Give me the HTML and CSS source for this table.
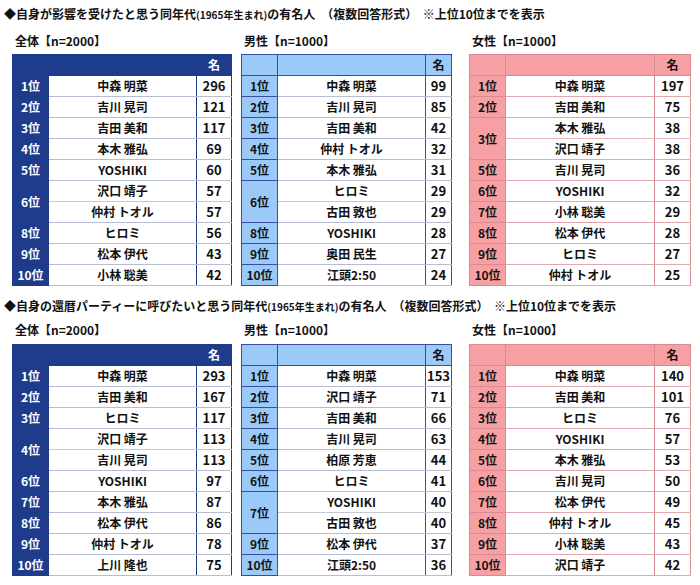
FILE: index.html
```html
<!DOCTYPE html>
<html lang="ja">
<head>
<meta charset="utf-8">
<title>同年代の有名人ランキング</title>
<link rel="stylesheet" href="styles.css">
</head>
<body>
<section class="section first">
  <h2 class="title">◆自身が影響を受けたと思う同年代<span class="small">(1965年生まれ)</span>の有名人　（複数回答形式）&nbsp;&nbsp;※上位10位までを表示</h2>
  <div class="tables">
    <div class="block all">
      <div class="cap">全体【n=2000】</div>
      <table>
        <colgroup><col class="c-rank"><col class="c-name"><col class="c-num"></colgroup>
        <tr class="head"><th></th><th></th><th>名</th></tr>
        <tr><th>1位</th><td>中森 明菜</td><td class="num">296</td></tr>
        <tr><th>2位</th><td>吉川 晃司</td><td class="num">121</td></tr>
        <tr><th>3位</th><td>吉田 美和</td><td class="num">117</td></tr>
        <tr><th>4位</th><td>本木 雅弘</td><td class="num">69</td></tr>
        <tr><th>5位</th><td>YOSHIKI</td><td class="num">60</td></tr>
        <tr><th rowspan="2">6位</th><td class="tie">沢口 靖子</td><td class="num tie">57</td></tr>
        <tr><td>仲村 トオル</td><td class="num">57</td></tr>
        <tr><th>8位</th><td>ヒロミ</td><td class="num">56</td></tr>
        <tr><th>9位</th><td>松本 伊代</td><td class="num">43</td></tr>
        <tr><th>10位</th><td>小林 聡美</td><td class="num">42</td></tr>
      </table>
    </div>
    <div class="block men">
      <div class="cap">男性【n=1000】</div>
      <table>
        <colgroup><col class="c-rank"><col class="c-name"><col class="c-num"></colgroup>
        <tr class="head"><th></th><th></th><th>名</th></tr>
        <tr><th>1位</th><td>中森 明菜</td><td class="num">99</td></tr>
        <tr><th>2位</th><td>吉川 晃司</td><td class="num">85</td></tr>
        <tr><th>3位</th><td>吉田 美和</td><td class="num">42</td></tr>
        <tr><th>4位</th><td>仲村 トオル</td><td class="num">32</td></tr>
        <tr><th>5位</th><td>本木 雅弘</td><td class="num">31</td></tr>
        <tr><th rowspan="2">6位</th><td class="tie">ヒロミ</td><td class="num tie">29</td></tr>
        <tr><td>古田 敦也</td><td class="num">29</td></tr>
        <tr><th>8位</th><td>YOSHIKI</td><td class="num">28</td></tr>
        <tr><th>9位</th><td>奥田 民生</td><td class="num">27</td></tr>
        <tr><th>10位</th><td>江頭2:50</td><td class="num">24</td></tr>
      </table>
    </div>
    <div class="block women">
      <div class="cap">女性【n=1000】</div>
      <table>
        <colgroup><col class="c-rank"><col class="c-name"><col class="c-num"></colgroup>
        <tr class="head"><th></th><th></th><th>名</th></tr>
        <tr><th>1位</th><td>中森 明菜</td><td class="num">197</td></tr>
        <tr><th>2位</th><td>吉田 美和</td><td class="num">75</td></tr>
        <tr><th rowspan="2">3位</th><td class="tie">本木 雅弘</td><td class="num tie">38</td></tr>
        <tr><td>沢口 靖子</td><td class="num">38</td></tr>
        <tr><th>5位</th><td>吉川 晃司</td><td class="num">36</td></tr>
        <tr><th>6位</th><td>YOSHIKI</td><td class="num">32</td></tr>
        <tr><th>7位</th><td>小林 聡美</td><td class="num">29</td></tr>
        <tr><th>8位</th><td>松本 伊代</td><td class="num">28</td></tr>
        <tr><th>9位</th><td>ヒロミ</td><td class="num">27</td></tr>
        <tr><th>10位</th><td>仲村 トオル</td><td class="num">25</td></tr>
      </table>
    </div>
  </div>
</section>

<section class="section second">
  <h2 class="title">◆自身の還暦パーティーに呼びたいと思う同年代<span class="small">(1965年生まれ)</span>の有名人　（複数回答形式）&nbsp;&nbsp;※上位10位までを表示</h2>
  <div class="tables">
    <div class="block all">
      <div class="cap">全体【n=2000】</div>
      <table>
        <colgroup><col class="c-rank"><col class="c-name"><col class="c-num"></colgroup>
        <tr class="head"><th></th><th></th><th>名</th></tr>
        <tr><th>1位</th><td>中森 明菜</td><td class="num">293</td></tr>
        <tr><th>2位</th><td>吉田 美和</td><td class="num">167</td></tr>
        <tr><th>3位</th><td>ヒロミ</td><td class="num">117</td></tr>
        <tr><th rowspan="2">4位</th><td class="tie">沢口 靖子</td><td class="num tie">113</td></tr>
        <tr><td>吉川 晃司</td><td class="num">113</td></tr>
        <tr><th>6位</th><td>YOSHIKI</td><td class="num">97</td></tr>
        <tr><th>7位</th><td>本木 雅弘</td><td class="num">87</td></tr>
        <tr><th>8位</th><td>松本 伊代</td><td class="num">86</td></tr>
        <tr><th>9位</th><td>仲村 トオル</td><td class="num">78</td></tr>
        <tr><th>10位</th><td>上川 隆也</td><td class="num">75</td></tr>
      </table>
    </div>
    <div class="block men">
      <div class="cap">男性【n=1000】</div>
      <table>
        <colgroup><col class="c-rank"><col class="c-name"><col class="c-num"></colgroup>
        <tr class="head"><th></th><th></th><th>名</th></tr>
        <tr><th>1位</th><td>中森 明菜</td><td class="num">153</td></tr>
        <tr><th>2位</th><td>沢口 靖子</td><td class="num">71</td></tr>
        <tr><th>3位</th><td>吉田 美和</td><td class="num">66</td></tr>
        <tr><th>4位</th><td>吉川 晃司</td><td class="num">63</td></tr>
        <tr><th>5位</th><td>柏原 芳恵</td><td class="num">44</td></tr>
        <tr><th>6位</th><td>ヒロミ</td><td class="num">41</td></tr>
        <tr><th rowspan="2">7位</th><td class="tie">YOSHIKI</td><td class="num tie">40</td></tr>
        <tr><td>古田 敦也</td><td class="num">40</td></tr>
        <tr><th>9位</th><td>松本 伊代</td><td class="num">37</td></tr>
        <tr><th>10位</th><td>江頭2:50</td><td class="num">36</td></tr>
      </table>
    </div>
    <div class="block women">
      <div class="cap">女性【n=1000】</div>
      <table>
        <colgroup><col class="c-rank"><col class="c-name"><col class="c-num"></colgroup>
        <tr class="head"><th></th><th></th><th>名</th></tr>
        <tr><th>1位</th><td>中森 明菜</td><td class="num">140</td></tr>
        <tr><th>2位</th><td>吉田 美和</td><td class="num">101</td></tr>
        <tr><th>3位</th><td>ヒロミ</td><td class="num">76</td></tr>
        <tr><th>4位</th><td>YOSHIKI</td><td class="num">57</td></tr>
        <tr><th>5位</th><td>本木 雅弘</td><td class="num">53</td></tr>
        <tr><th>6位</th><td>吉川 晃司</td><td class="num">50</td></tr>
        <tr><th>7位</th><td>松本 伊代</td><td class="num">49</td></tr>
        <tr><th>8位</th><td>仲村 トオル</td><td class="num">45</td></tr>
        <tr><th>9位</th><td>小林 聡美</td><td class="num">43</td></tr>
        <tr><th>10位</th><td>沢口 靖子</td><td class="num">42</td></tr>
      </table>
    </div>
  </div>
</section>
</body>
</html>
```

FILE: styles.css
```css
html, body {
  margin: 0;
  padding: 0;
  background: #ffffff;
}
body {
  padding-left: 4px;
  font-family: "Noto Sans CJK JP", "Noto Sans", sans-serif;
  color: #111111;
  font-weight: 700;
}
.title {
  margin: 6px 0 0 0;
  font-size: 12px;
  line-height: 16px;
  font-weight: 700;
  white-space: nowrap;
  color: #111;
}
.second .title {
  margin-top: 12px;
}
.small {
  font-size: 10px;
}
.tables {
  display: flex;
  margin-left: 8px;
}
.cap {
  margin: 10px 0 5px 3px;
  font-size: 12px;
  line-height: 16px;
}
.second .cap {
  margin-top: 7px;
  margin-bottom: 6px;
}
.block.men { margin-left: 9px; }
.block.women { margin-left: 17px; }

table {
  border-collapse: collapse;
  table-layout: fixed;
  font-size: 12px;
}
.all table { width: 220px; }
.men table { width: 211px; }
.women table { width: 222px; }
.c-rank { width: 36px; }
.all .c-num { width: 35px; }
.men .c-num { width: 26px; }
.women .c-num { width: 36px; }

tr { height: 21px; }
th, td {
  padding: 0;
  text-align: center;
  vertical-align: middle;
  line-height: 14px;
  font-weight: 700;
  white-space: nowrap;
}
td.num {
  font-size: 13px;
}

/* 全体: navy */
.all table { border: 1px solid #1d3a87; }
.all th { background: #1f3c8c; color: #ffffff; border: 1px solid #1d3a87; }
.all td { border-top: 1px solid #b7bdd4; border-bottom: 1px solid #b7bdd4; border-left: 1px solid #1d3a87; border-right: 1px solid #1d3a87; }
.all .head th { border-left-color: #6f86c0; }
.all .head th:first-child { border-left-color: #1d3a87; }

/* 男性: light blue */
.men table { border: 1px solid #3b4da2; }
.men th { background: #9ccaf8; color: #111; border: 1px solid #3b4da2; }
.men td { border-top: 1px solid #b7bdd4; border-bottom: 1px solid #b7bdd4; border-left: 1px solid #3b4da2; border-right: 1px solid #3b4da2; }

/* 女性: pink */
.women table { border: 1px solid #d98a92; }
.women th { background: #f7a0a3; color: #111; border: 1px solid #d98a92; }
.women td { border-top: 1px solid #e2a8ae; border-bottom: 1px solid #e2a8ae; border-left: 1px solid #d98a92; border-right: 1px solid #d98a92; }

td.tie { border-bottom-color: #c8c8d0; }
.women td.tie { border-bottom-color: #e6b8bc; }
```
